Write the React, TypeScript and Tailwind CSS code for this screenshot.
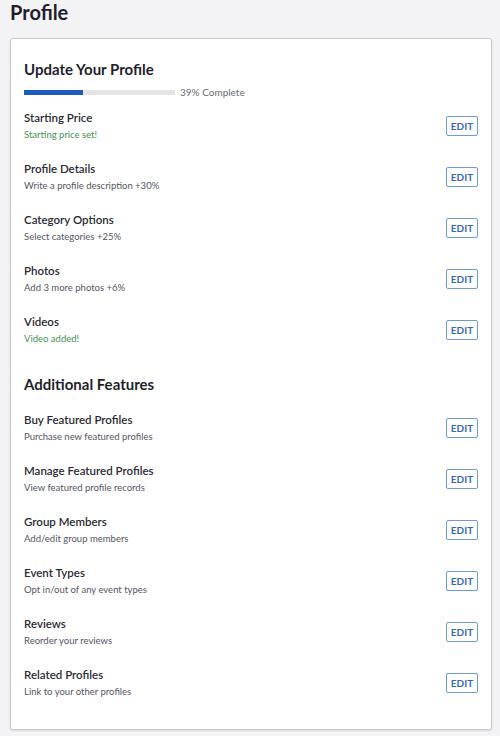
import React from "react";

type Row = { title: string; sub: string; green?: boolean };

const profileRows: Row[] = [
  { title: "Starting Price", sub: "Starting price set!", green: true },
  { title: "Profile Details", sub: "Write a profile description +30%" },
  { title: "Category Options", sub: "Select categories +25%" },
  { title: "Photos", sub: "Add 3 more photos +6%" },
  { title: "Videos", sub: "Video added!", green: true },
];

const featureRows: Row[] = [
  { title: "Buy Featured Profiles", sub: "Purchase new featured profiles" },
  { title: "Manage Featured Profiles", sub: "View featured profile records" },
  { title: "Group Members", sub: "Add/edit group members" },
  { title: "Event Types", sub: "Opt in/out of any event types" },
  { title: "Reviews", sub: "Reorder your reviews" },
  { title: "Related Profiles", sub: "Link to your other profiles" },
];

function ItemRow({ row }: { row: Row }) {
  return (
    <div className="flex h-[51px] items-start justify-between">
      <div className="flex flex-col">
        <div className="text-[11.5px] leading-[17px] font-semibold text-[#2a2a33]">{row.title}</div>
        <div
          className={
            "mt-[1px] text-[9.5px] leading-[15px] " +
            (row.green ? "text-[#3f9152]" : "text-[#55555f]")
          }
        >
          {row.sub}
        </div>
      </div>
      <button className="mt-[7px] h-[20px] w-[32px] rounded-[2px] border border-[#6f9ad9] bg-white text-[10px] font-bold leading-none text-[#3568b8]">
        EDIT
      </button>
    </div>
  );
}

export default function App() {
  return (
    <div
      className="min-h-[736px] w-[500px] bg-[#f3f3f5] px-[10px] pt-[1px]"
      style={{ fontFamily: "Lato, 'Open Sans', sans-serif" }}
    >
      <h1 className="h-[37px] text-[20px] leading-[23px] font-bold text-[#1f1f2b]">Profile</h1>
      <div className="h-[692px] w-[482px] rounded-[3px] border border-[#c9c9c9] bg-white pl-[13px] pr-[13px] pt-[19px] shadow-[0_1px_2px_rgba(0,0,0,0.12)]">
        <h2 className="text-[15px] leading-[22px] font-bold text-[#1f1f2b]">Update Your Profile</h2>
        <div className="mt-[5px] flex items-center gap-[5px]">
          <div className="h-[5px] w-[151px] bg-[#e4e4e6]">
            <div className="h-full bg-[#1e5bb8]" style={{ width: "39%" }} />
          </div>
          <span className="text-[10px] leading-[14px] text-[#6b6b73]">39% Complete</span>
        </div>
        <div className="mt-[10px]">
          {profileRows.map((r) => (
            <ItemRow key={r.title} row={r} />
          ))}
        </div>
        <h2 className="mt-[9px] text-[15px] leading-[22px] font-bold text-[#1f1f2b]">Additional Features</h2>
        <div className="mt-[16px]">
          {featureRows.map((r) => (
            <ItemRow key={r.title} row={r} />
          ))}
        </div>
      </div>
    </div>
  );
}
